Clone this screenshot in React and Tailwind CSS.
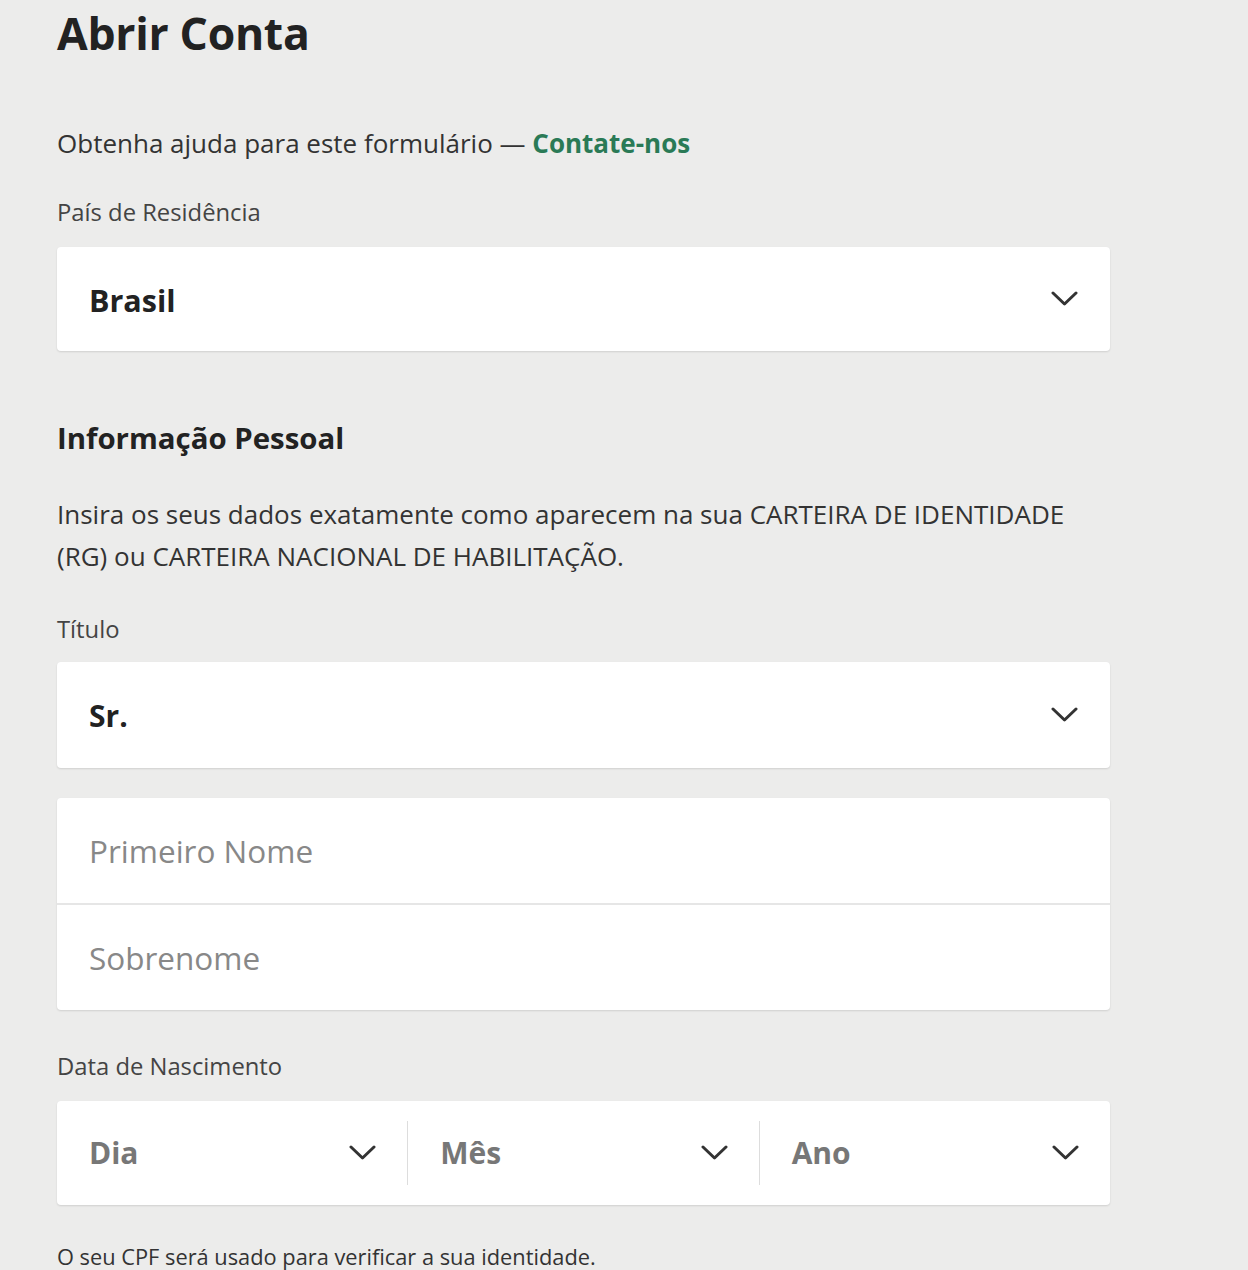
const font = { fontFamily: '"Open Sans", "Noto Sans", sans-serif' };

function Chevron() {
  return (
    <svg width="27" height="16" viewBox="0 0 27 16" fill="none" className="text-[#333] shrink-0">
      <polyline points="2,2 13.5,13 25,2" stroke="currentColor" strokeWidth="3" strokeLinecap="round" strokeLinejoin="round" />
    </svg>
  );
}

function SelectCard({ value }) {
  return (
    <div className="h-[106px] w-full bg-white rounded-[4px] shadow-[0_1px_2px_rgba(0,0,0,0.12)] flex items-center justify-between pl-[32px] pr-[32px]">
      <span className="text-[30px] font-bold text-[#222] pt-[2px]">{value}</span>
      <Chevron />
    </div>
  );
}

function DatePart({ label, last }) {
  return (
    <div className={`flex-1 flex items-center justify-between pl-[32px] pr-[31px] ${last ? '' : 'border-r border-[#ddd]'} h-[64px]`}>
      <span className="text-[30px] font-bold text-[#777]">{label}</span>
      <Chevron />
    </div>
  );
}

export default function App() {
  return (
    <div className="min-h-screen bg-[#ececeb] pl-[57px] text-[#333]" style={font}>
      <div className="w-[1053px]">
        <h1 className="text-[44.5px] leading-none font-bold text-[#222] pt-[11px] tracking-[-0.3px]">Abrir Conta</h1>

        <p className="mt-[70px] text-[26px] leading-[34px] text-[#333]">
          Obtenha ajuda para este formulário — <a href="#" className="font-bold text-[#2a7a56]">Contate-nos</a>
        </p>

        <label className="block mt-[37px] text-[23.8px] leading-[30px] text-[#444]">País de Residência</label>
        <div className="mt-[20px]">
          <div className="h-[104px] w-full bg-white rounded-[4px] shadow-[0_1px_2px_rgba(0,0,0,0.12)] flex items-center justify-between pl-[32px] pr-[32px]">
            <span className="text-[30.5px] font-bold text-[#222] pt-[4px]">Brasil</span>
            <Chevron />
          </div>
        </div>

        <h2 className="mt-[67px] text-[29.4px] leading-[40px] font-bold text-[#222]">Informação Pessoal</h2>

        <p className="mt-[35px] text-[26px] leading-[42px] text-[#333]">
          Insira os seus dados exatamente como aparecem na sua CARTEIRA DE IDENTIDADE (RG) ou CARTEIRA NACIONAL DE HABILITAÇÃO.
        </p>

        <label className="block mt-[37px] text-[23.8px] leading-[30px] text-[#444]">Título</label>
        <div className="mt-[18px]">
          <SelectCard value="Sr." />
        </div>

        <div className="mt-[30px] bg-white rounded-[4px] shadow-[0_1px_2px_rgba(0,0,0,0.12)]">
          <input
            placeholder="Primeiro Nome"
            className="block w-full h-[107px] px-[32px] bg-transparent text-[31.5px] text-[#333] placeholder:text-[#888] outline-none border-b-2 border-[#e6e6e6]"
          />
          <input
            placeholder="Sobrenome"
            className="block w-full h-[105px] px-[32px] bg-transparent text-[31.5px] text-[#333] placeholder:text-[#888] outline-none"
          />
        </div>

        <label className="block mt-[41px] text-[23.8px] leading-[30px] text-[#444]">Data de Nascimento</label>
        <div className="mt-[20px] h-[104px] bg-white rounded-[4px] shadow-[0_1px_2px_rgba(0,0,0,0.12)] flex items-center">
          <DatePart label="Dia" />
          <DatePart label="Mês" />
          <DatePart label="Ano" last />
        </div>

        <p className="mt-[37px] text-[21.8px] leading-[30px] text-[#333]">O seu CPF será usado para verificar a sua identidade.</p>
      </div>
    </div>
  );
}
